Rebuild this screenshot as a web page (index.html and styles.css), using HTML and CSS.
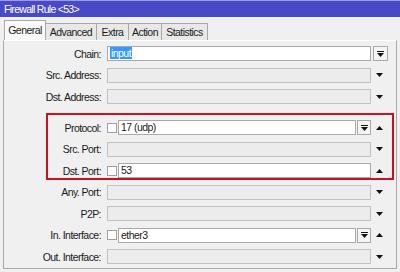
FILE: index.html
```html
<!DOCTYPE html>
<html>
<head>
<meta charset="utf-8">
<link rel="stylesheet" href="styles.css">
</head>
<body>
<div class="window">
  <div class="titlebar">Firewall Rule &lt;53&gt;</div>
  <div class="tabs">
    <div class="tab active w-general">General</div>
    <div class="tab w-advanced">Advanced</div>
    <div class="tab w-extra">Extra</div>
    <div class="tab w-action">Action</div>
    <div class="tab w-stats">Statistics</div>
  </div>
  <div class="panel">
    <div class="row">
      <div class="lbl">Chain:</div>
      <div class="ctl"><div class="field on"><span class="sel">input</span></div></div>
      <div class="side"><div class="btn"><svg width="7" height="6" viewBox="0 0 7 6"><rect width="7" height="1"/><path d="M0 2h7L3.5 6z"/></svg></div></div>
    </div>
    <div class="row">
      <div class="lbl">Src. Address:</div>
      <div class="ctl"><div class="field off"></div></div>
      <div class="side"><svg class="arr" width="7" height="4" viewBox="0 0 7 4"><path d="M0 0h7L3.5 4z"/></svg></div>
    </div>
    <div class="row">
      <div class="lbl">Dst. Address:</div>
      <div class="ctl"><div class="field off"></div></div>
      <div class="side"><svg class="arr" width="7" height="4" viewBox="0 0 7 4"><path d="M0 0h7L3.5 4z"/></svg></div>
    </div>
    <div class="group">
      <div class="row">
        <div class="lbl">Protocol:</div>
        <div class="ctl"><div class="chk"></div><div class="field on">17 (udp)</div><div class="btn small"><svg width="7" height="6" viewBox="0 0 7 6"><rect width="7" height="1"/><path d="M0 2h7L3.5 6z"/></svg></div></div>
        <div class="side"><svg class="arr" width="7" height="4" viewBox="0 0 7 4"><path d="M3.5 0L7 4H0z"/></svg></div>
      </div>
      <div class="row">
        <div class="lbl">Src. Port:</div>
        <div class="ctl"><div class="field off"></div></div>
        <div class="side"><svg class="arr" width="7" height="4" viewBox="0 0 7 4"><path d="M0 0h7L3.5 4z"/></svg></div>
      </div>
      <div class="row">
        <div class="lbl">Dst. Port:</div>
        <div class="ctl"><div class="chk"></div><div class="field on">53</div></div>
        <div class="side"><svg class="arr" width="7" height="4" viewBox="0 0 7 4"><path d="M3.5 0L7 4H0z"/></svg></div>
      </div>
    </div>
    <div class="row">
      <div class="lbl">Any. Port:</div>
      <div class="ctl"><div class="field off"></div></div>
      <div class="side"><svg class="arr" width="7" height="4" viewBox="0 0 7 4"><path d="M0 0h7L3.5 4z"/></svg></div>
    </div>
    <div class="row">
      <div class="lbl">P2P:</div>
      <div class="ctl"><div class="field off"></div></div>
      <div class="side"><svg class="arr" width="7" height="4" viewBox="0 0 7 4"><path d="M0 0h7L3.5 4z"/></svg></div>
    </div>
    <div class="row">
      <div class="lbl">In. Interface:</div>
      <div class="ctl"><div class="chk"></div><div class="field on">ether3</div><div class="btn small"><svg width="7" height="6" viewBox="0 0 7 6"><rect width="7" height="1"/><path d="M0 2h7L3.5 6z"/></svg></div></div>
      <div class="side"><svg class="arr" width="7" height="4" viewBox="0 0 7 4"><path d="M3.5 0L7 4H0z"/></svg></div>
    </div>
    <div class="row">
      <div class="lbl">Out. Interface:</div>
      <div class="ctl"><div class="field off"></div></div>
      <div class="side"><svg class="arr" width="7" height="4" viewBox="0 0 7 4"><path d="M0 0h7L3.5 4z"/></svg></div>
    </div>
  </div>
</div>
</body>
</html>
```

FILE: styles.css
```css
html, body {
  margin: 0;
  padding: 0;
}
body {
  width: 400px;
  height: 272px;
  overflow: hidden;
  background: #f0f0f0;
  font-family: "Liberation Sans", Arial, sans-serif;
  font-size: 10.5px;
  letter-spacing: -0.55px;
  color: #1a1a1a;
}
.window {
  width: 400px;
  height: 272px;
  display: flex;
  flex-direction: column;
}
.titlebar {
  height: 16px;
  border-top: 1px solid #9c9ce2;
  background: #4a4ac8;
  color: #fff;
  line-height: 16px;
  padding-left: 4px;
  letter-spacing: -0.7px;
  box-sizing: content-box;
}
.tabs {
  height: 23px;
  display: flex;
  align-items: flex-end;
  padding-left: 4px;
}
.tab {
  height: 16px;
  line-height: 17px;
  border: 1px solid #a8a8a8;
  border-bottom: none;
  border-left: none;
  background: #e8e8e8;
  text-align: center;
  box-sizing: content-box;
}
.tab.active {
  height: 19px;
  line-height: 18px;
  border-left: 1px solid #a8a8a8;
  background: #fafafa;
}
.w-general { width: 40px; }
.w-advanced { width: 50px; }
.w-extra { width: 31px; }
.w-action { width: 32px; }
.w-stats { width: 45px; }
.panel {
  margin-left: 3px;
  width: 394px;
  height: 229px;
  box-sizing: border-box;
  border: 1px solid #a8a8a8;
  border-top-color: #ffffff;
  padding-top: 2px;
  display: flex;
  flex-direction: column;
}
.row {
  height: 21.5px;
  display: grid;
  grid-template-columns: 97px 270px 17px;
  align-items: center;
}
.lbl {
  text-align: right;
}
.ctl {
  margin-left: 6px;
  display: flex;
  align-items: center;
  height: 15px;
}
.field {
  flex: 1;
  height: 15px;
  box-sizing: border-box;
  border: 1px solid #a9a9a9;
  line-height: 13px;
  padding-left: 2px;
  white-space: nowrap;
  overflow: hidden;
}
.field.on {
  background: #ffffff;
}
.field.off {
  background: #ececec;
  border-color: #c2c2c2;
}
.sel {
  background: #3399ff;
  color: #fff;
  padding: 0 1px;
}
.chk {
  width: 10px;
  height: 10px;
  box-sizing: border-box;
  border: 1px solid #a0a0a0;
  background: #fff;
  margin-right: 1px;
}
.btn {
  width: 15px;
  height: 15px;
  box-sizing: border-box;
  border: 1px solid #a9a9a9;
  background: #f4f4f4;
  display: flex;
  align-items: center;
  justify-content: center;
  margin-left: 1px;
}
.btn.small {
  width: 14px;
}
.btn svg, .arr {
  fill: #111;
  display: block;
}
.side {
  display: flex;
  align-items: center;
  justify-content: center;
  height: 15px;
}
.group {
  position: relative;
  margin-top: 9.5px;
}
.group::after {
  content: "";
  position: absolute;
  top: -4px;
  bottom: 2px;
  left: 42px;
  right: 2px;
  border: 2px solid #cc1020;
  pointer-events: none;
}
```
